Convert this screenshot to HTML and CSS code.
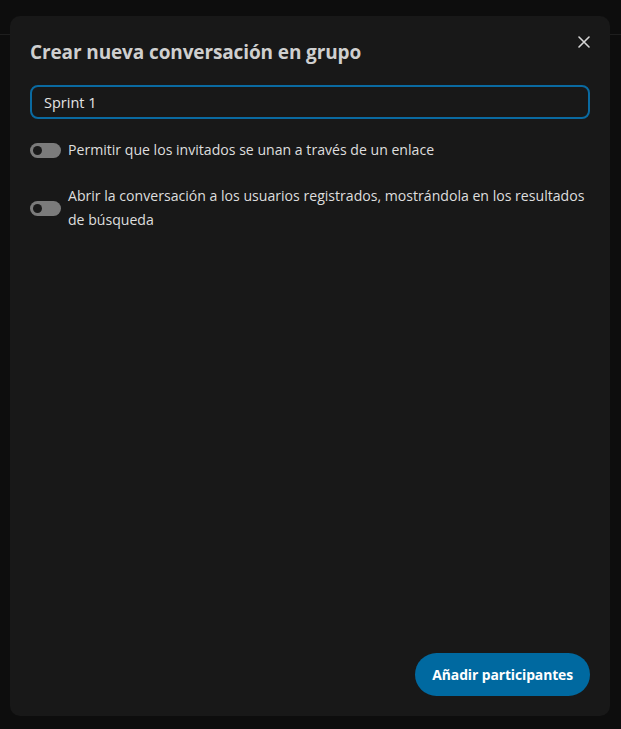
FILE: index.html
```html
<!DOCTYPE html>
<html lang="es">
<head>
<meta charset="utf-8">
<link rel="stylesheet" href="styles.css">
</head>
<body>
<div class="topbar"></div>
<div class="overlay">
  <div class="modal">
    <div class="modal-head">
      <h2 class="title">Crear nueva conversación en grupo</h2>
      <button class="close" aria-label="Cerrar">
        <svg width="12" height="12" viewBox="0 0 12 12"><path d="M1 1 L11 11 M11 1 L1 11" stroke="#d6d6d6" stroke-width="1.6" stroke-linecap="round"/></svg>
      </button>
    </div>
    <div class="field"><span class="field-text">Sprint 1</span></div>
    <div class="option">
      <span class="toggle"><span class="knob"></span></span>
      <span class="label">Permitir que los invitados se unan a través de un enlace</span>
    </div>
    <div class="option option-multi">
      <span class="toggle"><span class="knob"></span></span>
      <span class="label">Abrir la conversación a los usuarios registrados, mostrándola en los resultados de búsqueda</span>
    </div>
    <div class="spacer"></div>
    <div class="footer">
      <button class="primary">Añadir participantes</button>
    </div>
  </div>
</div>
</body>
</html>
```

FILE: styles.css
```css
html, body {
  margin: 0;
  height: 100%;
  background: #0d0d0d;
  font-family: "Open Sans", "Noto Sans", sans-serif;
}
.topbar {
  height: 34px;
  border-bottom: 1px solid #1e1e1e;
}
.overlay {
  position: fixed;
  inset: 0;
  padding: 16px 11px 13px 10px;
  display: flex;
}
.modal {
  flex: 1;
  background: #181818;
  border-radius: 10px;
  padding: 20px 20px 20px 20px;
  display: flex;
  flex-direction: column;
  box-sizing: border-box;
}
.modal-head {
  display: flex;
  align-items: flex-start;
  justify-content: space-between;
}
.title {
  margin: 0;
  font-size: 19px;
  line-height: 32px;
  font-weight: 700;
  color: #cfcfcf;
  letter-spacing: -0.12px;
}
.close {
  background: none;
  border: none;
  padding: 0;
  margin-top: 0;
  width: 12px;
  height: 12px;
  display: flex;
}
.field {
  margin-top: 17px;
  height: 34px;
  border: 2px solid #0a6aa1;
  border-radius: 8px;
  box-sizing: border-box;
  display: flex;
  align-items: center;
  padding-left: 12px;
}
.field-text {
  color: #e4e4e4;
  font-size: 14.5px;
}
.option {
  display: flex;
  align-items: center;
  gap: 7px;
  margin-top: 19px;
}
.option-multi {
  margin-top: 22px;
}
.toggle {
  flex: none;
  width: 31px;
  height: 15px;
  border-radius: 8px;
  background: #7b7b7b;
  display: flex;
  align-items: center;
  padding-left: 3px;
  box-sizing: border-box;
}
.knob {
  width: 9px;
  height: 9px;
  border-radius: 50%;
  background: #1a1a1a;
}
.label {
  color: #dedede;
  font-size: 14.1px;
  line-height: 24px;
}
.spacer {
  flex: 1;
}
.footer {
  display: flex;
  justify-content: flex-end;
}
.primary {
  background: #0069a0;
  color: #ffffff;
  border: none;
  border-radius: 22px;
  height: 43px;
  padding: 0 17px;
  font-family: inherit;
  font-size: 13.9px;
  font-weight: 700;
  letter-spacing: -0.1px;
}
```
